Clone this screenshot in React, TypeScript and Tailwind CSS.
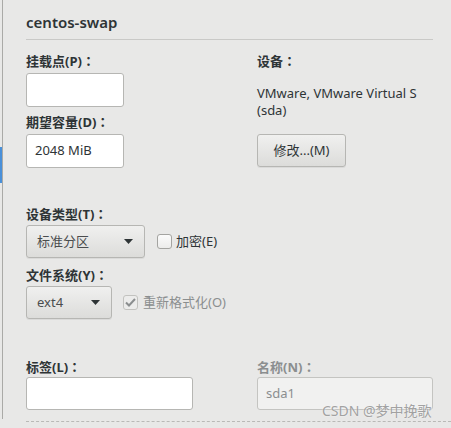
import React from 'react';

function Label({ text, muted }: { text: string; muted?: boolean }) {
  return (
    <div
      className={`h-[18px] text-[13px] font-bold leading-[18px] ${muted ? 'text-[#8b8e8f]' : 'text-[#2e3436]'}`}
    >
      {text}
      <span className="font-['Noto_Sans_CJK_TC',sans-serif]">：</span>
    </div>
  );
}

function Arrow() {
  return (
    <svg width="9" height="5" viewBox="0 0 9 5" className="shrink-0">
      <path d="M0 0H9L4.5 5Z" fill="#2e3436" />
    </svg>
  );
}

function Combo({ value, width }: { value: string; width: string }) {
  return (
    <div
      className={`flex h-[33px] ${width} items-center justify-between rounded-[3px] border border-[#b6b6b3] bg-gradient-to-b from-[#f0f0ef] to-[#dcdcda] pl-[10px] pr-[11px] text-[13px] text-[#4a4d4e] shadow-[0_1px_0_rgba(0,0,0,0.06)]`}
    >
      <span>{value}</span>
      <Arrow />
    </div>
  );
}

export default function App() {
  return (
    <div className="relative flex h-[428px] w-[451px] overflow-hidden bg-[#e8e8e7] font-['Noto_Sans','Noto_Sans_CJK_SC',sans-serif] text-[#2e3436]">
      {/* edge of the mount point list */}
      <div className="flex h-[419px] w-[3px] flex-col border-r border-[#aaaaa7]">
        <div className="h-[147px]" />
        <div className="h-[36px] w-[2px] bg-[#4a90d9]" />
      </div>

      <div className="flex flex-1 flex-col pl-[23px]">
        <div className="mr-[18px]">
          <h1 className="pt-[12px] text-[15px] font-semibold leading-[20px] text-[#2e3436]">
            centos-swap
          </h1>
          <div className="mt-[7px] border-t border-[#c9c9c7]" />
        </div>

        <div className="mt-[12px] flex">
          <div className="w-[231px]">
            <Label text="挂载点(P)" />
            <div className="mt-[3px] h-[34px] w-[98px] rounded-[3px] border border-[#b6b6b3] bg-white" />
            <div className="mt-[6px]">
              <Label text="期望容量(D)" />
            </div>
            <div className="mt-[3px] flex h-[34px] w-[98px] items-center rounded-[3px] border border-[#b6b6b3] bg-white pl-[8px] text-[13px]">
              2048 MiB
            </div>
          </div>
          <div className="w-[176px]">
            <Label text="设备" />
            <div className="mt-[15px] text-[13px] leading-[17px]">
              VMware, VMware Virtual S
              <br />
              (sda)
            </div>
            <button className="mt-[15px] flex h-[33px] w-[89px] items-center justify-center rounded-[3px] border border-[#b6b6b3] bg-gradient-to-b from-[#f0f0ef] to-[#dcdcda] text-[13px] text-[#2e3436] shadow-[0_1px_0_rgba(0,0,0,0.06)]">
              修改...(M)
            </button>
          </div>
        </div>

        <div className="mt-[37px]">
          <Label text="设备类型(T)" />
        </div>
        <div className="mt-[2px] flex items-center">
          <Combo value="标准分区" width="w-[119px]" />
          <div className="ml-[12px] h-[15px] w-[15px] rounded-[3px] border border-[#a4a4a1] bg-gradient-to-b from-[#fbfbfb] to-[#ececeb]" />
          <span className="ml-[4px] text-[13px]">加密(E)</span>
        </div>

        <div className="mt-[8px]">
          <Label text="文件系统(Y)" />
        </div>
        <div className="mt-[2px] flex items-center">
          <Combo value="ext4" width="w-[86px]" />
          <div className="ml-[11px] flex h-[15px] w-[15px] items-center justify-center rounded-[3px] border border-[#c2c2bf] bg-[#ececeb]">
            <svg width="11" height="9" viewBox="0 0 11 9">
              <path d="M1 4.5L4 7.5L10 1" fill="none" stroke="#8b8e8f" strokeWidth="2" />
            </svg>
          </div>
          <span className="ml-[5px] text-[13px] text-[#8b8e8f]">重新格式化(O)</span>
        </div>

        <div className="mt-[39px] flex">
          <div className="w-[231px]">
            <Label text="标签(L)" />
            <div className="mt-[1px] h-[33px] w-[167px] rounded-[3px] border border-[#b6b6b3] bg-white" />
          </div>
          <div className="w-[176px]">
            <Label text="名称(N)" muted />
            <div className="mt-[1px] flex h-[33px] w-[176px] items-center rounded-[3px] border border-[#c4c4c1] bg-[#f1f1f0] pl-[8px] text-[13px] text-[#8b8e8f]">
              sda1
            </div>
          </div>
        </div>

        <div className="mt-[11px] border-t border-dashed border-[#b9b9b6]" />
      </div>

      <div className="absolute left-[322px] top-[402px] text-[14px] leading-[18px] text-[#9a9a9a] opacity-90 [text-shadow:0_0_2px_#ffffff]">
        CSDN @梦中挽歌
      </div>
    </div>
  );
}
